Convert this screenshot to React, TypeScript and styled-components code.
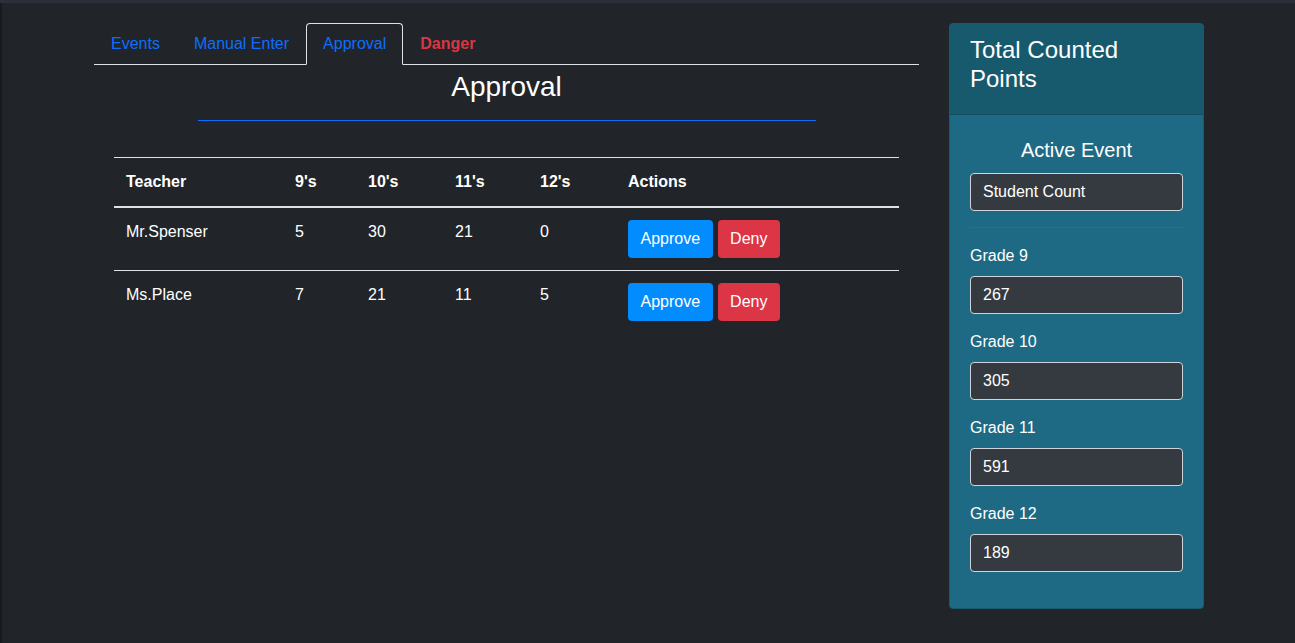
import React from "react";
import styled, { createGlobalStyle } from "styled-components";

const GlobalStyle = createGlobalStyle`
  html, body {
    margin: 0;
    padding: 0;
    background-color: #212529;
    font-family: "Liberation Sans", Arial, sans-serif;
    color: #fff;
  }
  * { box-sizing: border-box; }
`;

const TopStrip = styled.div`
  height: 3px;
  background-color: #2c2e3a;
`;

const Page = styled.div`
  display: flex;
  align-items: flex-start;
  padding: 20px 0 0 92px;
  min-height: 640px;
  border-left: 2px solid #1a1a1e;
`;

const Main = styled.div`
  width: 825px;
`;

const TabBar = styled.ul`
  display: flex;
  list-style: none;
  margin: 0;
  padding: 0;
  height: 42px;
  border-bottom: 1px solid #dee2e6;
`;

const Tab = styled.li<{ $active?: boolean; $danger?: boolean }>`
  height: 42px;
  padding: 0 16px;
  display: flex;
  align-items: center;
  font-size: 16px;
  color: ${(p) => (p.$danger ? "#dc3545" : "#0d6efd")};
  font-weight: ${(p) => (p.$danger ? "bold" : "normal")};
  border: 1px solid ${(p) => (p.$active ? "#dee2e6" : "transparent")};
  border-bottom-color: ${(p) => (p.$active ? "#212529" : "transparent")};
  border-radius: 4px 4px 0 0;
  margin-bottom: -1px;
  background: ${(p) => (p.$active ? "#212529" : "transparent")};
`;

const Title = styled.h3`
  margin: 5px 0 0;
  text-align: center;
  font-size: 28px;
  font-weight: normal;
  line-height: 34px;
`;

const TitleRule = styled.hr`
  margin: 16px auto 0;
  width: 618px;
  border: 0;
  border-top: 1px solid #0d6efd;
`;

const Table = styled.table`
  margin: 36px 0 0 20px;
  width: 785px;
  border-collapse: collapse;
  font-size: 16px;
  table-layout: fixed;
`;

const HeadCell = styled.th<{ $w: number }>`
  width: ${(p) => p.$w}px;
  text-align: left;
  padding: 14px 12px 14px;
  font-weight: bold;
  line-height: 20px;
  border-top: 1px solid #dee2e6;
  border-bottom: 2px solid #dee2e6;
`;

const Row = styled.tr`
  border-bottom: 1px solid #dee2e6;
  &:last-child {
    border-bottom: 0;
  }
`;

const Cell = styled.td`
  padding: 14px 12px 0;
  vertical-align: top;
  line-height: 20px;
  height: 62px;
`;

const ActionCell = styled(Cell)`
  padding-top: 12px;
  display: flex;
  gap: 5px;
`;

const Button = styled.button<{ $variant: "primary" | "danger" }>`
  height: 38px;
  padding: 0 12.5px;
  border: 0;
  border-radius: 4px;
  font-family: inherit;
  font-size: 16px;
  color: #fff;
  background-color: ${(p) => (p.$variant === "primary" ? "#038cfd" : "#dc3545")};
`;

const Card = styled.aside`
  margin: 0 0 0 30px;
  width: 255px;
  background-color: #1e6a85;
  border: 1px solid #1a5a70;
  border-radius: 4px;
  overflow: hidden;
`;

const CardHeader = styled.div`
  background-color: #175a6e;
  padding: 11px 20px 21px;
  font-size: 24px;
  line-height: 29px;
  border-bottom: 1px solid #134f62;
`;

const CardBody = styled.div`
  padding: 22px 20px 36px;
`;

const SubTitle = styled.div`
  text-align: center;
  font-size: 20px;
  line-height: 26px;
  margin-bottom: 10px;
`;

const Rule = styled.hr`
  margin: 16px 0 18px;
  border: 0;
  border-top: 1px solid rgba(13, 110, 253, 0.5);
`;

const Field = styled.div`
  display: flex;
  flex-direction: column;
  & + & {
    margin-top: 18px;
  }
`;

const Label = styled.label`
  font-size: 16px;
  line-height: 20px;
  margin-bottom: 10px;
`;

const Input = styled.div`
  height: 38px;
  border: 1px solid #ced4da;
  border-radius: 4px;
  background-color: #343a40;
  padding: 0 12px;
  display: flex;
  align-items: center;
  font-size: 16px;
`;

const columns = [
  { label: "Teacher", w: 169 },
  { label: "9's", w: 73 },
  { label: "10's", w: 87 },
  { label: "11's", w: 85 },
  { label: "12's", w: 88 },
  { label: "Actions", w: 283 },
];

const requests = [
  { teacher: "Mr.Spenser", counts: [5, 30, 21, 0] },
  { teacher: "Ms.Place", counts: [7, 21, 11, 5] },
];

const grades = [
  { label: "Grade 9", value: 267 },
  { label: "Grade 10", value: 305 },
  { label: "Grade 11", value: 591 },
  { label: "Grade 12", value: 189 },
];

export default function App() {
  return (
    <>
      <GlobalStyle />
      <TopStrip />
      <Page>
        <Main>
          <TabBar>
            <Tab>Events</Tab>
            <Tab>Manual Enter</Tab>
            <Tab $active>Approval</Tab>
            <Tab $danger>Danger</Tab>
          </TabBar>
          <Title>Approval</Title>
          <TitleRule />
          <Table>
            <thead>
              <tr>
                {columns.map((c) => (
                  <HeadCell key={c.label} $w={c.w}>
                    {c.label}
                  </HeadCell>
                ))}
              </tr>
            </thead>
            <tbody>
              {requests.map((r) => (
                <Row key={r.teacher}>
                  <Cell>{r.teacher}</Cell>
                  {r.counts.map((n, i) => (
                    <Cell key={i}>{n}</Cell>
                  ))}
                  <ActionCell>
                    <Button $variant="primary">Approve</Button>
                    <Button $variant="danger">Deny</Button>
                  </ActionCell>
                </Row>
              ))}
            </tbody>
          </Table>
        </Main>
        <Card>
          <CardHeader>
            Total Counted
            <br />
            Points
          </CardHeader>
          <CardBody>
            <SubTitle>Active Event</SubTitle>
            <Input>Student Count</Input>
            <Rule />
            {grades.map((g) => (
              <Field key={g.label}>
                <Label>{g.label}</Label>
                <Input>{g.value}</Input>
              </Field>
            ))}
          </CardBody>
        </Card>
      </Page>
    </>
  );
}
